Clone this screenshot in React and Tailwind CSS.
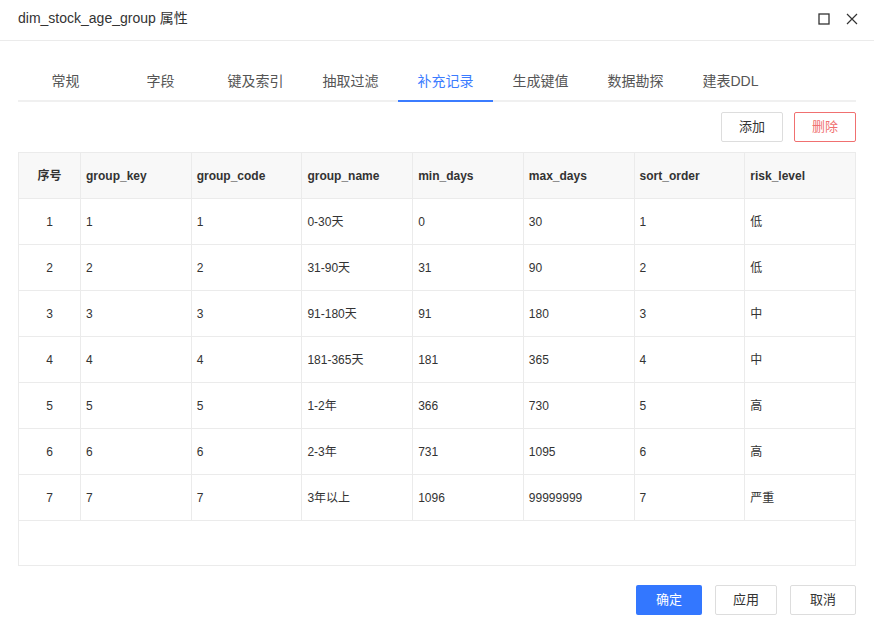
const TABS = ['常规', '字段', '键及索引', '抽取过滤', '补充记录', '生成键值', '数据勘探', '建表DDL']

const COLUMNS = ['group_key', 'group_code', 'group_name', 'min_days', 'max_days', 'sort_order', 'risk_level']

const ROWS = [
  ['1', '1', '0-30天', '0', '30', '1', '低'],
  ['2', '2', '31-90天', '31', '90', '2', '低'],
  ['3', '3', '91-180天', '91', '180', '3', '中'],
  ['4', '4', '181-365天', '181', '365', '4', '中'],
  ['5', '5', '1-2年', '366', '730', '5', '高'],
  ['6', '6', '2-3年', '731', '1095', '6', '高'],
  ['7', '7', '3年以上', '1096', '99999999', '7', '严重'],
]

export default function App() {
  const active = 4

  return (
    <div
      className="w-[874px] h-[622px] bg-white text-[#333] flex flex-col"
      style={{ fontFamily: '"Liberation Sans", Arial, "Noto Sans CJK SC", sans-serif' }}
    >
      {/* Title bar */}
      <div className="h-[41px] shrink-0 border-b border-[#ebebeb] flex items-center justify-between pl-[18px] pr-[16px]">
        <span className="text-[14px] text-[#333] -mt-[3px]">dim_stock_age_group 属性</span>
        <div className="flex items-center gap-[16px] -mt-[2px]">
          <svg width="12" height="12" viewBox="0 0 12 12" fill="none" stroke="#333" strokeWidth="1.3">
            <rect x="1" y="1" width="10" height="10" />
          </svg>
          <svg width="12" height="12" viewBox="0 0 12 12" fill="none" stroke="#333" strokeWidth="1.2">
            <path d="M1 1L11 11M11 1L1 11" />
          </svg>
        </div>
      </div>

      <div className="px-[18px] flex flex-col flex-1">
        {/* Tabs */}
        <div className="mt-[21px] flex border-b-2 border-[#f0f0f0]">
          {TABS.map((t, i) => (
            <div
              key={t}
              className={`w-[95px] h-[40px] flex items-center justify-center text-[14px] -mb-[2px] border-b-2 ${
                i === active ? 'text-[#3b7cff] border-[#3b7cff]' : 'text-[#555] border-transparent'
              }`}
            >
              {t}
            </div>
          ))}
        </div>

        {/* Toolbar */}
        <div className="flex justify-end gap-[11px] mt-[10px]">
          <button className="w-[62px] h-[30px] border border-[#ddd] rounded-[2px] text-[13px] text-[#333] bg-white">添加</button>
          <button className="w-[62px] h-[30px] border border-[#f07070] rounded-[2px] text-[13px] text-[#f07070] bg-white">删除</button>
        </div>

        {/* Table */}
        <div className="mt-[10px] border border-[#ebebeb] h-[414px] text-[12px]">
          <div className="grid grid-cols-[61px_repeat(7,1fr)] h-[46px] bg-[#f8f8f8] border-b border-[#ebebeb] font-bold">
            <div className="flex items-center justify-center">序号</div>
            {COLUMNS.map(c => (
              <div key={c} className="flex items-center px-[5px] border-l border-[#ebebeb]">{c}</div>
            ))}
          </div>
          {ROWS.map((r, i) => (
            <div key={i} className="grid grid-cols-[61px_repeat(7,1fr)] h-[46px] border-b border-[#ebebeb]">
              <div className="flex items-center justify-center">{i + 1}</div>
              {r.map((v, j) => (
                <div key={j} className="flex items-center px-[5px] border-l border-[#ebebeb]">{v}</div>
              ))}
            </div>
          ))}
        </div>

        {/* Footer */}
        <div className="flex justify-end gap-[13px] mt-[19px]">
          <button className="w-[66px] h-[30px] rounded-[2px] bg-[#3377ff] text-white text-[13px]">确定</button>
          <button className="w-[62px] h-[30px] border border-[#ddd] rounded-[2px] text-[13px] text-[#333] bg-white">应用</button>
          <button className="w-[66px] h-[30px] border border-[#ddd] rounded-[2px] text-[13px] text-[#333] bg-white">取消</button>
        </div>
      </div>
    </div>
  )
}
